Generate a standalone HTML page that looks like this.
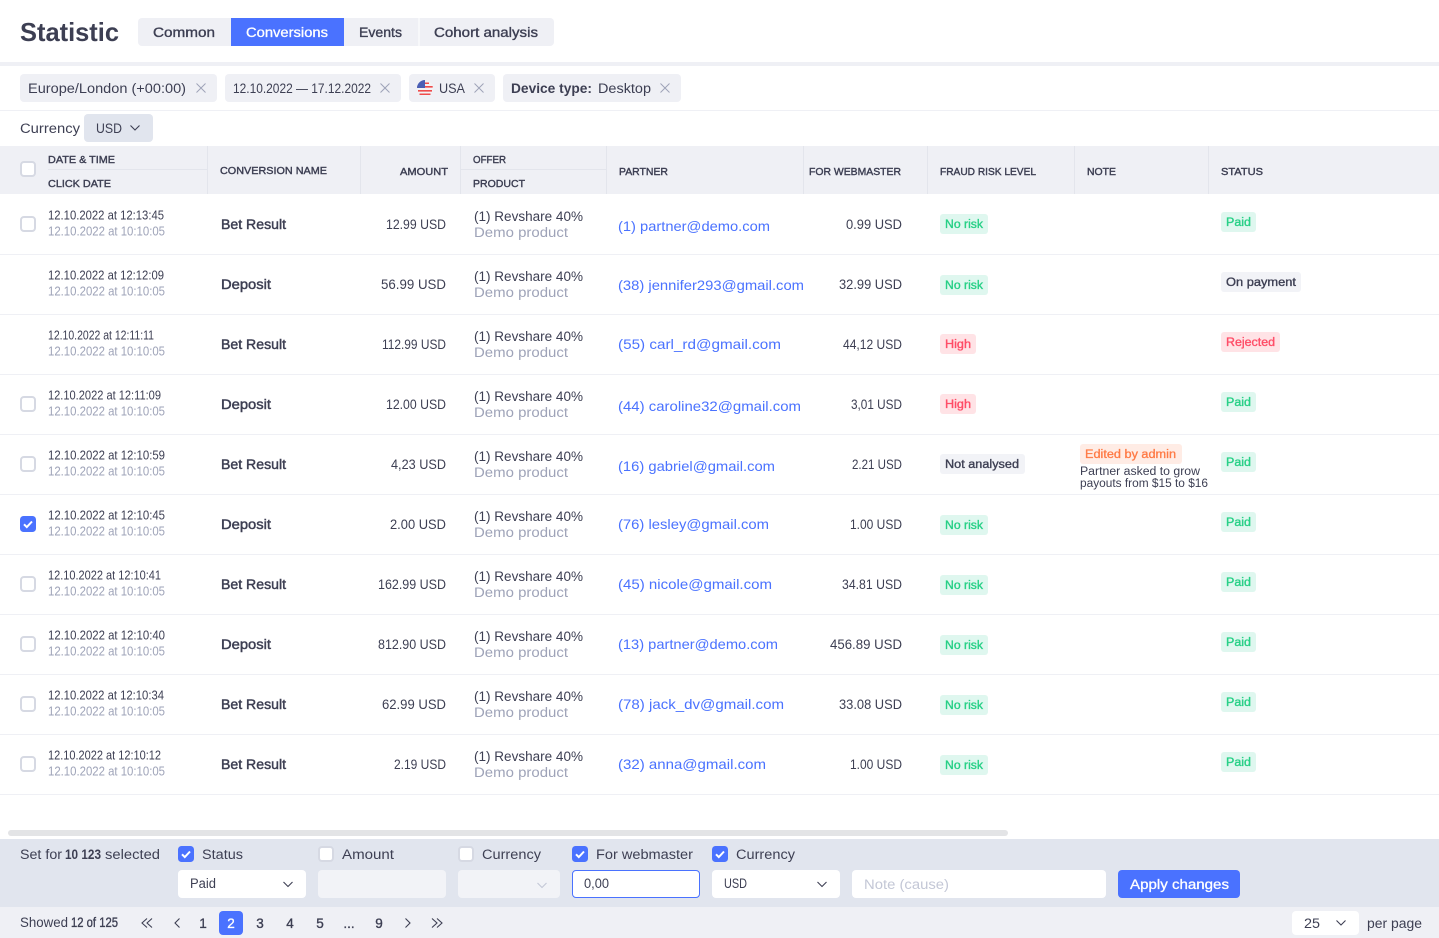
<!DOCTYPE html>
<html lang="en"><head><meta charset="utf-8"><title>Statistic</title>
<style>
html,body{margin:0;padding:0;background:#fff;width:1439px;height:938px;overflow:hidden}
svg{display:block}
text{font-family:"Liberation Sans",sans-serif;font-size:13.5px;fill:#3d3f53;white-space:pre}
.m{stroke:#3d3f53;stroke-width:.35}
.b{font-weight:700}
.h{font-size:10.5px;stroke:#3d3f53;stroke-width:.4}
.s{font-size:13px}
.g{font-size:13px;fill:#9ea3b8}
.o{font-size:13.5px}
.p{font-size:13.5px;fill:#9ea3b8}
.l{font-size:14px;fill:#4a72ff}
.n{font-size:13.5px;stroke:#3d3f53;stroke-width:.45}
.gr{font-size:11.5px;fill:#27d086;stroke:#27d086;stroke-width:.35}
.rd{font-size:11.5px;fill:#ff4d67;stroke:#ff4d67;stroke-width:.35}
.dk{font-size:11.5px;stroke:#3d3f53;stroke-width:.35}
.or{font-size:11.5px;fill:#ff7a45;stroke:#ff7a45;stroke-width:.3}
.w{fill:#fff;stroke:#fff;stroke-width:.3}
.x{stroke:#9ea3b8;stroke-width:1;fill:none}
.c{stroke:#3d3f53;stroke-width:1.1;fill:none}
</style></head><body>
<svg width="1439" height="938" viewBox="0 0 1439 938" xmlns="http://www.w3.org/2000/svg">
<defs>
<g id="cb"><rect x="1" y="1" width="14" height="14" rx="3" fill="#fff" stroke="#d6d9e3" stroke-width="2"/></g>
<g id="cc"><rect width="16" height="16" rx="3.5" fill="#4a72ff"/><path d="M4 8.3l2.8 2.8L12 5.5" fill="none" stroke="#fff" stroke-width="2"/></g>
<path id="ch" d="M-4.5-2L0 2.500 4.500-2"/>
<path id="xx" d="M-4.500-4.500L4.500 4.500M4.500-4.500L-4.500 4.500"/>
</defs>

<!-- top -->
<text x="20" y="41" textLength="99" lengthAdjust="spacingAndGlyphs" class="b" style="font-size:26px">Statistic</text>
<rect x="138" y="18" width="416" height="28" rx="4" fill="#eff0f5"/>
<rect x="231" y="18" width="113" height="28" fill="#4a72ff"/>
<rect x="418.500" y="18" width="1" height="28" fill="#fff"/>
<text x="153" y="37" textLength="62" lengthAdjust="spacingAndGlyphs" class="m">Common</text>
<text x="246" y="37" textLength="82" lengthAdjust="spacingAndGlyphs" class="w">Conversions</text>
<text x="359" y="37" textLength="43" lengthAdjust="spacingAndGlyphs" class="m">Events</text>
<text x="434" y="37" textLength="104" lengthAdjust="spacingAndGlyphs" class="m">Cohort analysis</text>
<rect x="0" y="62" width="1439" height="4" fill="#eff0f5"/>

<!-- chips -->
<rect x="20" y="74" width="197" height="28" rx="4" fill="#eff0f5"/>
<rect x="225" y="74" width="176" height="28" rx="4" fill="#eff0f5"/>
<rect x="409" y="74" width="86" height="28" rx="4" fill="#eff0f5"/>
<rect x="503" y="74" width="178" height="28" rx="4" fill="#eff0f5"/>
<text x="28" y="93" textLength="158" lengthAdjust="spacingAndGlyphs" class="o">Europe/London (+00:00)</text>
<use href="#xx" x="201" y="88" class="x"/>
<text x="233" y="93" textLength="138" lengthAdjust="spacingAndGlyphs" class="o">12.10.2022 — 17.12.2022</text>
<use href="#xx" x="385" y="88" class="x"/>
<circle cx="425" cy="88" r="8" fill="#f3f3f5"/>
<path d="M417.300 86h15.400v1.600h-15.400zM418 90h14v1.600h-14zM419.500 93.500h11v1.500h-11zM421 82.500h8v1.500h-8z" fill="#ef4c4c"/>
<path d="M425 80a8 8 0 0 0-8 8h8z" fill="#4a5fb5"/>
<text x="439" y="93" textLength="26" lengthAdjust="spacingAndGlyphs" class="o">USA</text>
<use href="#xx" x="479" y="88" class="x"/>
<text x="511" y="93" textLength="81" lengthAdjust="spacingAndGlyphs" class="b o">Device type:</text>
<text x="598" y="93" textLength="53" lengthAdjust="spacingAndGlyphs" class="o">Desktop</text>
<use href="#xx" x="665" y="88" class="x"/>
<rect x="0" y="110" width="1439" height="1" fill="#eff0f5"/>

<text x="20" y="133" textLength="60" lengthAdjust="spacingAndGlyphs" class="o">Currency</text>
<rect x="84" y="114" width="69" height="28" rx="4" fill="#e1e5ee"/>
<text x="96" y="133" textLength="26" lengthAdjust="spacingAndGlyphs">USD</text>
<use href="#ch" x="135" y="127.500" class="c"/>

<!-- table head -->
<rect x="0" y="146" width="1439" height="48" fill="#eff0f5"/>
<path d="M207.500 146v48M360.500 146v48M460.500 146v48M606.500 146v48M803.500 146v48M927.500 146v48M1074.500 146v48M1208.500 146v48M48 169.500h159M460 169.500h146" stroke="#e3e5ec" fill="none"/>
<use href="#cb" x="20" y="161"/>
<text x="48" y="163" textLength="67" lengthAdjust="spacingAndGlyphs" class="h">DATE &amp; TIME</text>
<text x="48" y="187" textLength="63" lengthAdjust="spacingAndGlyphs" class="h">CLICK DATE</text>
<text x="220" y="174" textLength="107" lengthAdjust="spacingAndGlyphs" class="h">CONVERSION NAME</text>
<text x="400" y="175" textLength="48" lengthAdjust="spacingAndGlyphs" class="h">AMOUNT</text>
<text x="473" y="163" textLength="33" lengthAdjust="spacingAndGlyphs" class="h">OFFER</text>
<text x="473" y="187" textLength="52" lengthAdjust="spacingAndGlyphs" class="h">PRODUCT</text>
<text x="619" y="175" textLength="49" lengthAdjust="spacingAndGlyphs" class="h">PARTNER</text>
<text x="809" y="175" textLength="92" lengthAdjust="spacingAndGlyphs" class="h">FOR WEBMASTER</text>
<text x="940" y="175" textLength="96" lengthAdjust="spacingAndGlyphs" class="h">FRAUD RISK LEVEL</text>
<text x="1087" y="175" textLength="29" lengthAdjust="spacingAndGlyphs" class="h">NOTE</text>
<text x="1221" y="175" textLength="42" lengthAdjust="spacingAndGlyphs" class="h">STATUS</text>

<!-- separators -->
<path d="M0 254.500h1439M0 314.500h1439M0 374.500h1439M0 434.500h1439M0 494.500h1439M0 554.500h1439M0 614.500h1439M0 674.500h1439M0 734.500h1439M0 794.500h1439" stroke="#eff0f5" fill="none"/>

<!-- row 1 -->
<use href="#cb" x="20" y="216"/>
<text x="48" y="219.500" textLength="116" lengthAdjust="spacingAndGlyphs" class="s">12.10.2022 at 12:13:45</text>
<text x="48" y="235.500" textLength="117" lengthAdjust="spacingAndGlyphs" class="g">12.10.2022 at 10:10:05</text>
<text x="221" y="229" textLength="65" lengthAdjust="spacingAndGlyphs" class="n">Bet Result</text>
<text x="386" y="229" textLength="60" lengthAdjust="spacingAndGlyphs">12.99 USD</text>
<text x="474" y="221" textLength="109" lengthAdjust="spacingAndGlyphs" class="o">(1) Revshare 40%</text>
<text x="474" y="237" textLength="94" lengthAdjust="spacingAndGlyphs" class="p">Demo product</text>
<text x="618" y="231" textLength="152" lengthAdjust="spacingAndGlyphs" class="l">(1) partner@demo.com</text>
<text x="846" y="229" textLength="56" lengthAdjust="spacingAndGlyphs">0.99 USD</text>
<rect x="940" y="214" width="48" height="20" rx="3" fill="#dff7ef"/>
<text x="945" y="228" textLength="38" lengthAdjust="spacingAndGlyphs" class="gr">No risk</text>
<rect x="1221" y="212" width="35" height="20" rx="3" fill="#dff7ef"/>
<text x="1226" y="226" textLength="25" lengthAdjust="spacingAndGlyphs" class="gr">Paid</text>

<!-- row 2 -->
<text x="48" y="279.500" textLength="116" lengthAdjust="spacingAndGlyphs" class="s">12.10.2022 at 12:12:09</text>
<text x="48" y="295.500" textLength="117" lengthAdjust="spacingAndGlyphs" class="g">12.10.2022 at 10:10:05</text>
<text x="221" y="289" textLength="50" lengthAdjust="spacingAndGlyphs" class="n">Deposit</text>
<text x="381" y="289" textLength="65" lengthAdjust="spacingAndGlyphs">56.99 USD</text>
<text x="474" y="281" textLength="109" lengthAdjust="spacingAndGlyphs" class="o">(1) Revshare 40%</text>
<text x="474" y="297" textLength="94" lengthAdjust="spacingAndGlyphs" class="p">Demo product</text>
<text x="618" y="290" textLength="186" lengthAdjust="spacingAndGlyphs" class="l">(38) jennifer293@gmail.com</text>
<text x="839" y="289" textLength="63" lengthAdjust="spacingAndGlyphs">32.99 USD</text>
<rect x="940" y="275" width="48" height="20" rx="3" fill="#dff7ef"/>
<text x="945" y="289" textLength="38" lengthAdjust="spacingAndGlyphs" class="gr">No risk</text>
<rect x="1221" y="272" width="80" height="20" rx="3" fill="#f2f3f7"/>
<text x="1226" y="286" textLength="70" lengthAdjust="spacingAndGlyphs" class="dk">On payment</text>

<!-- row 3 -->
<text x="48" y="339.500" textLength="106" lengthAdjust="spacingAndGlyphs" class="s">12.10.2022 at 12:11:11</text>
<text x="48" y="355.500" textLength="117" lengthAdjust="spacingAndGlyphs" class="g">12.10.2022 at 10:10:05</text>
<text x="221" y="349" textLength="65" lengthAdjust="spacingAndGlyphs" class="n">Bet Result</text>
<text x="382" y="349" textLength="64" lengthAdjust="spacingAndGlyphs">112.99 USD</text>
<text x="474" y="341" textLength="109" lengthAdjust="spacingAndGlyphs" class="o">(1) Revshare 40%</text>
<text x="474" y="357" textLength="94" lengthAdjust="spacingAndGlyphs" class="p">Demo product</text>
<text x="618" y="349" textLength="163" lengthAdjust="spacingAndGlyphs" class="l">(55) carl_rd@gmail.com</text>
<text x="843" y="349" textLength="59" lengthAdjust="spacingAndGlyphs">44,12 USD</text>
<rect x="940" y="334" width="36" height="20" rx="3" fill="#ffe3e6"/>
<text x="945" y="348" textLength="26" lengthAdjust="spacingAndGlyphs" class="rd">High</text>
<rect x="1221" y="332" width="59" height="20" rx="3" fill="#ffe3e6"/>
<text x="1226" y="346" textLength="49" lengthAdjust="spacingAndGlyphs" class="rd">Rejected</text>

<!-- row 4 -->
<use href="#cb" x="20" y="396"/>
<text x="48" y="399.500" textLength="113" lengthAdjust="spacingAndGlyphs" class="s">12.10.2022 at 12:11:09</text>
<text x="48" y="415.500" textLength="117" lengthAdjust="spacingAndGlyphs" class="g">12.10.2022 at 10:10:05</text>
<text x="221" y="409" textLength="50" lengthAdjust="spacingAndGlyphs" class="n">Deposit</text>
<text x="386" y="409" textLength="60" lengthAdjust="spacingAndGlyphs">12.00 USD</text>
<text x="474" y="401" textLength="109" lengthAdjust="spacingAndGlyphs" class="o">(1) Revshare 40%</text>
<text x="474" y="417" textLength="94" lengthAdjust="spacingAndGlyphs" class="p">Demo product</text>
<text x="618" y="411" textLength="183" lengthAdjust="spacingAndGlyphs" class="l">(44) caroline32@gmail.com</text>
<text x="851" y="409" textLength="51" lengthAdjust="spacingAndGlyphs">3,01 USD</text>
<rect x="940" y="394" width="36" height="20" rx="3" fill="#ffe3e6"/>
<text x="945" y="408" textLength="26" lengthAdjust="spacingAndGlyphs" class="rd">High</text>
<rect x="1221" y="392" width="35" height="20" rx="3" fill="#dff7ef"/>
<text x="1226" y="406" textLength="25" lengthAdjust="spacingAndGlyphs" class="gr">Paid</text>

<!-- row 5 -->
<use href="#cb" x="20" y="456"/>
<text x="48" y="459.500" textLength="117" lengthAdjust="spacingAndGlyphs" class="s">12.10.2022 at 12:10:59</text>
<text x="48" y="475.500" textLength="117" lengthAdjust="spacingAndGlyphs" class="g">12.10.2022 at 10:10:05</text>
<text x="221" y="469" textLength="65" lengthAdjust="spacingAndGlyphs" class="n">Bet Result</text>
<text x="391" y="469" textLength="55" lengthAdjust="spacingAndGlyphs">4,23 USD</text>
<text x="474" y="461" textLength="109" lengthAdjust="spacingAndGlyphs" class="o">(1) Revshare 40%</text>
<text x="474" y="477" textLength="94" lengthAdjust="spacingAndGlyphs" class="p">Demo product</text>
<text x="618" y="471" textLength="157" lengthAdjust="spacingAndGlyphs" class="l">(16) gabriel@gmail.com</text>
<text x="852" y="469" textLength="50" lengthAdjust="spacingAndGlyphs">2.21 USD</text>
<rect x="940" y="454" width="85" height="20" rx="3" fill="#f2f3f7"/>
<text x="945" y="468" textLength="74" lengthAdjust="spacingAndGlyphs" class="dk">Not analysed</text>
<rect x="1080" y="444" width="102" height="20" rx="3" fill="#ffece5"/>
<text x="1085" y="458" textLength="91" lengthAdjust="spacingAndGlyphs" class="or">Edited by admin</text>
<text x="1080" y="475" textLength="120" lengthAdjust="spacingAndGlyphs" style="font-size:11.5px">Partner asked to grow</text>
<text x="1080" y="487" textLength="128" lengthAdjust="spacingAndGlyphs" style="font-size:11.5px">payouts from $15 to $16</text>
<rect x="1221" y="452" width="35" height="20" rx="3" fill="#dff7ef"/>
<text x="1226" y="466" textLength="25" lengthAdjust="spacingAndGlyphs" class="gr">Paid</text>

<!-- row 6 -->
<use href="#cc" x="20" y="516"/>
<text x="48" y="519.500" textLength="117" lengthAdjust="spacingAndGlyphs" class="s">12.10.2022 at 12:10:45</text>
<text x="48" y="535.500" textLength="117" lengthAdjust="spacingAndGlyphs" class="g">12.10.2022 at 10:10:05</text>
<text x="221" y="529" textLength="50" lengthAdjust="spacingAndGlyphs" class="n">Deposit</text>
<text x="390" y="529" textLength="56" lengthAdjust="spacingAndGlyphs">2.00 USD</text>
<text x="474" y="521" textLength="109" lengthAdjust="spacingAndGlyphs" class="o">(1) Revshare 40%</text>
<text x="474" y="537" textLength="94" lengthAdjust="spacingAndGlyphs" class="p">Demo product</text>
<text x="618" y="529" textLength="151" lengthAdjust="spacingAndGlyphs" class="l">(76) lesley@gmail.com</text>
<text x="850" y="529" textLength="52" lengthAdjust="spacingAndGlyphs">1.00 USD</text>
<rect x="940" y="515" width="48" height="20" rx="3" fill="#dff7ef"/>
<text x="945" y="529" textLength="38" lengthAdjust="spacingAndGlyphs" class="gr">No risk</text>
<rect x="1221" y="512" width="35" height="20" rx="3" fill="#dff7ef"/>
<text x="1226" y="526" textLength="25" lengthAdjust="spacingAndGlyphs" class="gr">Paid</text>

<!-- row 7 -->
<use href="#cb" x="20" y="576"/>
<text x="48" y="579.500" textLength="113" lengthAdjust="spacingAndGlyphs" class="s">12.10.2022 at 12:10:41</text>
<text x="48" y="595.500" textLength="117" lengthAdjust="spacingAndGlyphs" class="g">12.10.2022 at 10:10:05</text>
<text x="221" y="589" textLength="65" lengthAdjust="spacingAndGlyphs" class="n">Bet Result</text>
<text x="378" y="589" textLength="68" lengthAdjust="spacingAndGlyphs">162.99 USD</text>
<text x="474" y="581" textLength="109" lengthAdjust="spacingAndGlyphs" class="o">(1) Revshare 40%</text>
<text x="474" y="597" textLength="94" lengthAdjust="spacingAndGlyphs" class="p">Demo product</text>
<text x="618" y="589" textLength="154" lengthAdjust="spacingAndGlyphs" class="l">(45) nicole@gmail.com</text>
<text x="842" y="589" textLength="60" lengthAdjust="spacingAndGlyphs">34.81 USD</text>
<rect x="940" y="575" width="48" height="20" rx="3" fill="#dff7ef"/>
<text x="945" y="589" textLength="38" lengthAdjust="spacingAndGlyphs" class="gr">No risk</text>
<rect x="1221" y="572" width="35" height="20" rx="3" fill="#dff7ef"/>
<text x="1226" y="586" textLength="25" lengthAdjust="spacingAndGlyphs" class="gr">Paid</text>

<!-- row 8 -->
<use href="#cb" x="20" y="636"/>
<text x="48" y="639.500" textLength="117" lengthAdjust="spacingAndGlyphs" class="s">12.10.2022 at 12:10:40</text>
<text x="48" y="655.500" textLength="117" lengthAdjust="spacingAndGlyphs" class="g">12.10.2022 at 10:10:05</text>
<text x="221" y="649" textLength="50" lengthAdjust="spacingAndGlyphs" class="n">Deposit</text>
<text x="378" y="649" textLength="68" lengthAdjust="spacingAndGlyphs">812.90 USD</text>
<text x="474" y="641" textLength="109" lengthAdjust="spacingAndGlyphs" class="o">(1) Revshare 40%</text>
<text x="474" y="657" textLength="94" lengthAdjust="spacingAndGlyphs" class="p">Demo product</text>
<text x="618" y="649" textLength="160" lengthAdjust="spacingAndGlyphs" class="l">(13) partner@demo.com</text>
<text x="830" y="649" textLength="72" lengthAdjust="spacingAndGlyphs">456.89 USD</text>
<rect x="940" y="635" width="48" height="20" rx="3" fill="#dff7ef"/>
<text x="945" y="649" textLength="38" lengthAdjust="spacingAndGlyphs" class="gr">No risk</text>
<rect x="1221" y="632" width="35" height="20" rx="3" fill="#dff7ef"/>
<text x="1226" y="646" textLength="25" lengthAdjust="spacingAndGlyphs" class="gr">Paid</text>

<!-- row 9 -->
<use href="#cb" x="20" y="696"/>
<text x="48" y="699.500" textLength="116" lengthAdjust="spacingAndGlyphs" class="s">12.10.2022 at 12:10:34</text>
<text x="48" y="715.500" textLength="117" lengthAdjust="spacingAndGlyphs" class="g">12.10.2022 at 10:10:05</text>
<text x="221" y="709" textLength="65" lengthAdjust="spacingAndGlyphs" class="n">Bet Result</text>
<text x="382" y="709" textLength="64" lengthAdjust="spacingAndGlyphs">62.99 USD</text>
<text x="474" y="701" textLength="109" lengthAdjust="spacingAndGlyphs" class="o">(1) Revshare 40%</text>
<text x="474" y="717" textLength="94" lengthAdjust="spacingAndGlyphs" class="p">Demo product</text>
<text x="618" y="709" textLength="166" lengthAdjust="spacingAndGlyphs" class="l">(78) jack_dv@gmail.com</text>
<text x="839" y="709" textLength="63" lengthAdjust="spacingAndGlyphs">33.08 USD</text>
<rect x="940" y="695" width="48" height="20" rx="3" fill="#dff7ef"/>
<text x="945" y="709" textLength="38" lengthAdjust="spacingAndGlyphs" class="gr">No risk</text>
<rect x="1221" y="692" width="35" height="20" rx="3" fill="#dff7ef"/>
<text x="1226" y="706" textLength="25" lengthAdjust="spacingAndGlyphs" class="gr">Paid</text>

<!-- row 10 -->
<use href="#cb" x="20" y="756"/>
<text x="48" y="759.500" textLength="113" lengthAdjust="spacingAndGlyphs" class="s">12.10.2022 at 12:10:12</text>
<text x="48" y="775.500" textLength="117" lengthAdjust="spacingAndGlyphs" class="g">12.10.2022 at 10:10:05</text>
<text x="221" y="769" textLength="65" lengthAdjust="spacingAndGlyphs" class="n">Bet Result</text>
<text x="394" y="769" textLength="52" lengthAdjust="spacingAndGlyphs">2.19 USD</text>
<text x="474" y="761" textLength="109" lengthAdjust="spacingAndGlyphs" class="o">(1) Revshare 40%</text>
<text x="474" y="777" textLength="94" lengthAdjust="spacingAndGlyphs" class="p">Demo product</text>
<text x="618" y="769" textLength="148" lengthAdjust="spacingAndGlyphs" class="l">(32) anna@gmail.com</text>
<text x="850" y="769" textLength="52" lengthAdjust="spacingAndGlyphs">1.00 USD</text>
<rect x="940" y="755" width="48" height="20" rx="3" fill="#dff7ef"/>
<text x="945" y="769" textLength="38" lengthAdjust="spacingAndGlyphs" class="gr">No risk</text>
<rect x="1221" y="752" width="35" height="20" rx="3" fill="#dff7ef"/>
<text x="1226" y="766" textLength="25" lengthAdjust="spacingAndGlyphs" class="gr">Paid</text>

<!-- scrollbar -->
<rect x="8" y="830" width="1000" height="6" rx="3" fill="#e3e4e6"/>

<!-- bulk panel -->
<rect x="0" y="839" width="1439" height="68" fill="#e1e5ee"/>
<text x="20" y="859" textLength="42" lengthAdjust="spacingAndGlyphs" class="o">Set for</text>
<text x="65" y="859" textLength="36" lengthAdjust="spacingAndGlyphs" class="b o">10 123</text>
<text x="105" y="859" textLength="55" lengthAdjust="spacingAndGlyphs" class="o">selected</text>
<use href="#cc" x="178" y="846"/>
<text x="202" y="859" textLength="41" lengthAdjust="spacingAndGlyphs" class="o">Status</text>
<use href="#cb" x="318" y="846"/>
<text x="342" y="859" textLength="52" lengthAdjust="spacingAndGlyphs" class="o">Amount</text>
<use href="#cb" x="458" y="846"/>
<text x="482" y="859" textLength="59" lengthAdjust="spacingAndGlyphs" class="o">Currency</text>
<use href="#cc" x="572" y="846"/>
<text x="596" y="859" textLength="97" lengthAdjust="spacingAndGlyphs" class="o">For webmaster</text>
<use href="#cc" x="712" y="846"/>
<text x="736" y="859" textLength="59" lengthAdjust="spacingAndGlyphs" class="o">Currency</text>

<rect x="178" y="870" width="128" height="28" rx="4" fill="#fff"/>
<text x="190" y="888" textLength="26" lengthAdjust="spacingAndGlyphs">Paid</text>
<use href="#ch" x="288" y="884" class="c"/>
<rect x="318" y="870" width="128" height="28" rx="4" fill="#f2f3f7"/>
<rect x="458" y="870" width="102" height="28" rx="4" fill="#f2f3f7"/>
<use href="#ch" x="542" y="885" style="stroke:#c3c7d6;stroke-width:1.1;fill:none"/>
<rect x="572.500" y="870.500" width="127" height="27" rx="3.500" fill="#fff" stroke="#4a72ff"/>
<text x="584" y="888" textLength="25" lengthAdjust="spacingAndGlyphs">0,00</text>
<rect x="712" y="870" width="128" height="28" rx="4" fill="#fff"/>
<text x="724" y="888" textLength="23" lengthAdjust="spacingAndGlyphs">USD</text>
<use href="#ch" x="822" y="884" class="c"/>
<rect x="852" y="870" width="254" height="28" rx="4" fill="#fff"/>
<text x="864" y="889" textLength="85" lengthAdjust="spacingAndGlyphs" class="o" style="fill:#c3c7d6">Note (cause)</text>
<rect x="1118" y="870" width="122" height="28" rx="4" fill="#4a72ff"/>
<text x="1130" y="889" textLength="99" lengthAdjust="spacingAndGlyphs" class="w o">Apply changes</text>

<!-- footer -->
<rect x="0" y="907" width="1439" height="31" fill="#eff0f5"/>
<text x="20" y="927" textLength="48" lengthAdjust="spacingAndGlyphs">Showed</text>
<text x="71" y="927" textLength="47" lengthAdjust="spacingAndGlyphs" class="m">12 of 125</text>
<path d="M147 918.500l-5 4.500 5 4.500M152 918.500l-5 4.500 5 4.500M179.500 918.500l-4.500 4.500 4.500 4.500M405.500 918.500l4.500 4.500-4.500 4.500M432 918.500l5 4.500-5 4.500M437 918.500l5 4.500-5 4.500" class="c"/>
<rect x="219" y="911" width="24" height="24" rx="4" fill="#4a72ff"/>
<text x="203" y="928" text-anchor="middle" class="m">1</text>
<text x="231" y="928" text-anchor="middle" class="w">2</text>
<text x="260" y="928" text-anchor="middle" class="m">3</text>
<text x="290" y="928" text-anchor="middle" class="m">4</text>
<text x="320" y="928" text-anchor="middle" class="m">5</text>
<text x="349" y="928" text-anchor="middle" class="m">...</text>
<text x="379" y="928" text-anchor="middle" class="m">9</text>
<rect x="1292" y="911" width="67" height="24" rx="4" fill="#fff"/>
<text x="1304" y="928" textLength="16" lengthAdjust="spacingAndGlyphs">25</text>
<use href="#ch" x="1341" y="922.500" class="c"/>
<text x="1367" y="928" textLength="55" lengthAdjust="spacingAndGlyphs">per page</text>
</svg>
</body></html>
